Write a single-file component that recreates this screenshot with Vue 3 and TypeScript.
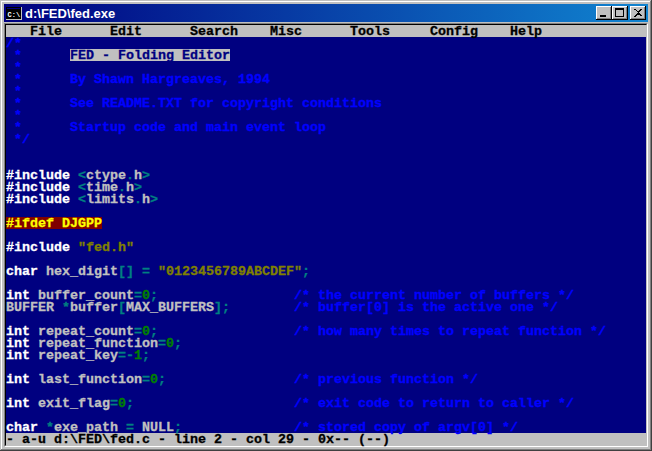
<script setup lang="ts">
interface Tok { c: string; t: string }

const pad = (s: string, c: string) => s + ' '.repeat(Math.max(0, 36 - s.length)) + c

const source: string[] = [
  '/*',
  '@FED',
  ' *',
  ' *      By Shawn Hargreaves, 1994',
  ' *',
  ' *      See README.TXT for copyright conditions',
  ' *',
  ' *      Startup code and main event loop',
  ' */',
  '',
  '',
  '#include <ctype.h>',
  '#include <time.h>',
  '#include <limits.h>',
  '',
  '@IFDEF',
  '',
  '#include "fed.h"',
  '',
  'char hex_digit[] = "0123456789ABCDEF";',
  '',
  pad('int buffer_count=0;', '/* the current number of buffers */'),
  pad('BUFFER *buffer[MAX_BUFFERS];', '/* buffer[0] is the active one */'),
  '',
  pad('int repeat_count=0;', '/* how many times to repeat function */'),
  'int repeat_function=0;',
  'int repeat_key=-1;',
  '',
  pad('int last_function=0;', '/* previous function */'),
  '',
  pad('int exit_flag=0;', '/* exit code to return to caller */'),
  '',
  pad('char *exe_path = NULL;', '/* stored copy of argv[0] */'),
]

function tokenize(line: string): Tok[] {
  if (line === '@FED') return [{ c: 'cm', t: ' *      ' }, { c: 'sel', t: 'FED - Folding Editor' }]
  if (line === '@IFDEF') return [{ c: 'cond', t: '#ifdef DJGPP' }]
  if (line.startsWith(' *')) return [{ c: 'cm', t: line }]
  const out: Tok[] = []
  const re = /(\/\*.*)|("[^"]*")|(#\w+|\b(?:int|char)\b)|(\b\d+\b)|([A-Za-z_]\w*)|(\s+)|(.)/g
  for (const m of line.matchAll(re)) {
    const c = m[1] ? 'cm' : m[2] ? 'str' : m[3] ? 'kw' : m[4] ? 'num' : m[5] ? 'id' : m[6] ? 'sp' : 'op'
    out.push({ c, t: m[0] })
  }
  return out
}

const rows = source.map(tokenize)
const menu = '   File      Edit      Search    Misc      Tools     Config    Help'
const status = '- a-u d:\\FED\\fed.c - line 2 - col 29 - 0x-- (--)'
</script>

<template>
  <div class="window">
    <div class="titlebar">
      <svg class="appicon" width="16" height="13" viewBox="0 0 16 13">
        <rect x="0" y="0" width="16" height="13" fill="#c0c0c0" />
        <rect x="0" y="0" width="15" height="12" fill="#000" />
        <rect x="1" y="1" width="13" height="1" fill="#000080" />
        <text x="1.5" y="9.500" class="icontext">C:\</text>
      </svg>
      <span class="title">d:\FED\fed.exe</span>
      <div class="controls">
        <button class="btn">
          <svg width="16" height="14" viewBox="0 0 16 14"><rect x="4" y="9" width="6" height="2" fill="#000" /></svg>
        </button>
        <button class="btn">
          <svg width="16" height="14" viewBox="0 0 16 14"><path d="M3 2h9v9H3zM4 4v6h7V4z" fill="#000" fill-rule="evenodd" /></svg>
        </button>
        <button class="btn close">
          <svg width="16" height="14" viewBox="0 0 16 14"><path d="M4 3h2v1h1v1h2V4h1V3h2v1h-1v1h-1v1H9v1h1v1h1v1h1v1h-2v-1H9V9H7v1H6v1H4v-1h1V9h1V8h1V7h1V6H7V5H6V4H4z" fill="#000" /></svg>
        </button>
      </div>
    </div>
    <div class="sunken-outer">
      <div class="sunken-inner">
        <div class="console">
          <div class="row bar">{{ menu }}</div>
          <div class="code">
            <div v-for="(toks, i) in rows" :key="i" class="row">
              <span v-for="(tok, j) in toks" :key="j" :class="tok.c">{{ tok.t }}</span>
            </div>
          </div>
          <div class="row bar">{{ status }}</div>
        </div>
      </div>
    </div>
  </div>
</template>

<style scoped>
.window {
  width: 652px;
  height: 451px;
  box-sizing: border-box;
  background: #c0c0c0;
  padding: 4px;
  display: flex;
  flex-direction: column;
  overflow: hidden;
  box-shadow:
    inset -1px -1px #404040,
    inset 1px 1px #c0c0c0,
    inset -2px -2px #808080,
    inset 2px 2px #fff;
}
.titlebar {
  height: 18px;
  flex: none;
  display: flex;
  align-items: center;
  background: linear-gradient(to right, #000080, #1084d0);
  padding: 0 2px;
  margin-bottom: 1px;
}
.appicon {
  flex: none;
  display: block;
}
.icontext {
  font: bold 7px "Liberation Mono", monospace;
  fill: #fff;
}
.title {
  margin-left: 3px;
  color: #fff;
  font: bold 13px "Liberation Sans", sans-serif;
  white-space: pre;
}
.controls {
  margin-left: auto;
  display: flex;
}
.btn {
  width: 16px;
  height: 14px;
  padding: 0;
  border: 0;
  display: block;
  background: #c0c0c0;
  box-shadow:
    inset -1px -1px #000,
    inset 1px 1px #fff,
    inset -2px -2px #808080;
}
.btn svg {
  display: block;
}
.close {
  margin-left: 2px;
}
.sunken-outer {
  border: 1px solid;
  border-color: #808080 #fff #fff #808080;
  width: 644px;
  box-sizing: border-box;
}
.sunken-inner {
  border: 1px solid;
  border-color: #000 #c0c0c0 #c0c0c0 #000;
}
.console {
  width: 640px;
  background: #000080;
  font: bold 13.33px/14px "Liberation Mono", monospace;
  -webkit-text-stroke: 0.3px currentColor;
}
.code {
  height: 396px;
}
.row {
  height: 12px;
  line-height: 14px;
  white-space: pre;
}
.row span {
  display: inline-block;
  height: 12px;
  vertical-align: top;
}
.bar {
  background: #c0c0c0;
  color: #000;
}
.cm { color: #0000ff; }
.sel { background: #c0c0c0; color: #000080; }
.cond { background: #800000; color: #ffff00; }
.str { color: #808000; }
.kw { color: #fff; }
.num { color: #008000; }
.id { color: #c0c0c0; }
.op { color: #008080; }
</style>

<style>
html, body {
  margin: 0;
  background: #c0c0c0;
}
</style>
